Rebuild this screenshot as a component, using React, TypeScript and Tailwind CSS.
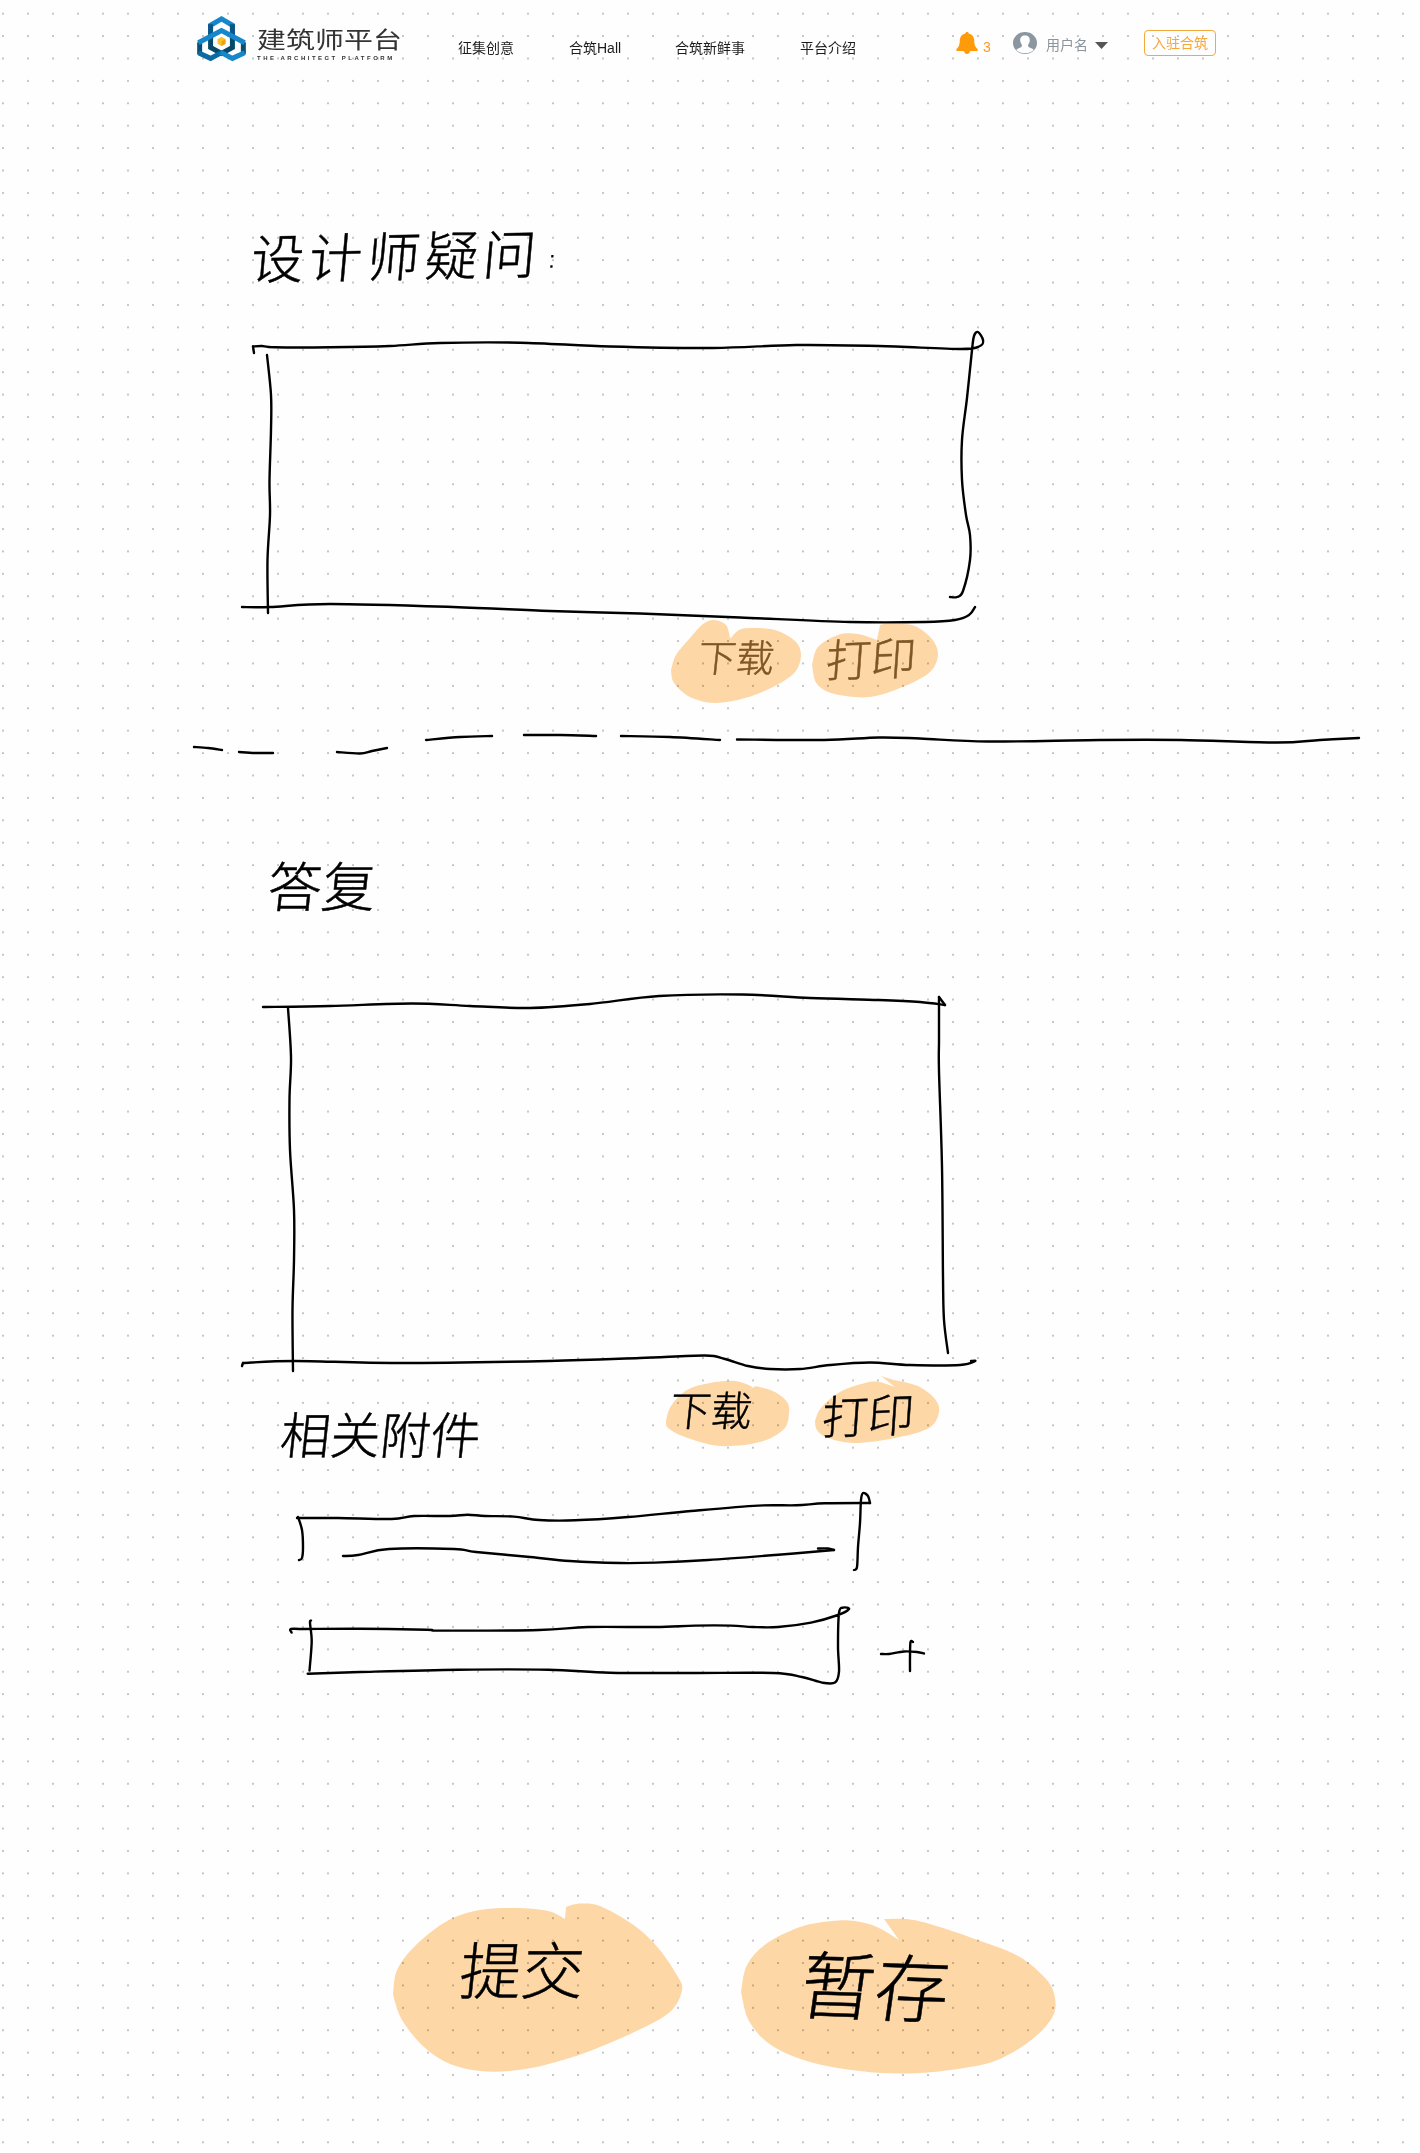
import type { ReactNode } from "react";

type Point = [number, number];

/** Turns a flat list of x,y numbers into a rounded pen line. */
function curve(source: string): string {
  const n = source.trim().split(/[\s,]+/).map(Number);
  const pts: Point[] = [];
  for (let i = 0; i < n.length; i += 2) pts.push([n[i], n[i + 1]]);
  const at = (i: number): Point => pts[Math.max(0, Math.min(pts.length - 1, i))];
  let d = `M${pts[0][0]} ${pts[0][1]}`;
  for (let i = 0; i < pts.length - 1; i++) {
    const [a, b, c, e] = [at(i - 1), at(i), at(i + 1), at(i + 2)];
    d += `C${b[0] + (c[0] - a[0]) / 6} ${b[1] + (c[1] - a[1]) / 6} ${c[0] - (e[0] - b[0]) / 6} ${c[1] - (e[1] - b[1]) / 6} ${c[0]} ${c[1]}`;
  }
  return d;
}

/** A marker blob: two rounded runs joined by the notch where the marker stroke closes. */
function blobPath(first: string, notch: string, second: string): string {
  return curve(first) + notch + curve(second).replace(/^[^C]*/, "") + "Z";
}

function Ink({ viewBox, lines, className }: { viewBox: string; lines: string[]; className: string }) {
  return (
    <svg viewBox={viewBox} className={className} fill="none" stroke="#000" strokeWidth="2.4" strokeLinecap="round" strokeLinejoin="round">
      {lines.map((line) => (
        <path key={line} d={curve(line)} />
      ))}
    </svg>
  );
}

function MarkerButton({
  viewBox,
  blob,
  size,
  text,
  children,
}: {
  viewBox: string;
  blob: string;
  size: string;
  text: string;
  children: ReactNode;
}) {
  return (
    <button className={`grid shrink-0 place-items-center ${size}`}>
      <svg viewBox={viewBox} className="size-full mix-blend-multiply [grid-area:1/1]">
        <path d={blob} fill="#ffd8a8" />
      </svg>
      <span className={`z-10 whitespace-nowrap font-light leading-none [-webkit-text-stroke:0.5px_currentColor] [grid-area:1/1] ${text}`}>{children}</span>
    </button>
  );
}

function Logo() {
  return (
    <svg viewBox="48 44 154 142" className="h-[47px] w-[51px] shrink-0" fill="none" strokeWidth="15">
      <path d="M92 112V75L125 56L158 75V112" stroke="#1687cb" />
      <path d="M92 72V118M158 72V118" stroke="#0b5688" />
      <path d="M92 104V142L125 160L158 142V104" stroke="#064a6b" />
      <path d="M59 126V162M191 126V162" stroke="#07506f" />
      <path d="M55 158L92 175L128 156" stroke="#0b6aa3" />
      <path d="M195 158L158 175L122 156" stroke="#1687cb" />
      <path d="M55 128L125 91L195 128" stroke="#1687cb" />
      <path d="M125 110L137 117V131L125 138L113 131V117Z" fill="#fbc02d" stroke="none" />
      <path d="M125 124L137 117V131L125 138Z" fill="#f0a010" stroke="none" />
    </svg>
  );
}

function Header() {
  return (
    <header className="flex h-[88px] items-start pl-[196px]">
      <a className="flex pt-[15px]">
        <Logo />
        <span className="ml-[10px] flex w-[147px] flex-col pt-[13px] text-[#333]">
          <span className="origin-left scale-x-[1.26] whitespace-nowrap text-[23px] leading-[24px]">建筑师平台</span>
          <span className="mt-[2px] whitespace-nowrap text-[6px] font-bold leading-[8px] tracking-[2.5px]">THE ARCHITECT PLATFORM</span>
        </span>
      </a>
      <nav className="ml-[54px] flex pt-[38px] text-[14px] leading-[20px] text-[#1c1c1c]">
        <a className="w-[111px]">征集创意</a>
        <a className="w-[106px]">合筑Hall</a>
        <a className="w-[125px]">合筑新鲜事</a>
        <a className="w-[156px]">平台介绍</a>
      </nav>
      <div className="flex pt-[32px]">
        <svg viewBox="0 0 22 22" className="h-[22px] w-[22px]" fill="#ff9a0a">
          <path d="M11 0c1 0 1.6.6 1.7 1.4C16.500 2.300 18 5 18.200 8.500c.2 4.500 1 6.500 3 8.200.9.800.7 2.300-.6 2.300H14c-.3 1.800-1.500 3-3 3s-2.700-1.200-3-3H1.400C.1 19-.1 17.500.8 16.700c2-1.700 2.800-3.700 3-8.200C4 5 5.500 2.300 9.300 1.400 9.400.6 10 0 11 0Z" />
        </svg>
        <span className="ml-[5px] w-[30px] pt-[6px] text-[14px] leading-[18px] text-[#ff9a1f]">3</span>
        <svg viewBox="0 0 24 22" className="h-[22px] w-[24px]" preserveAspectRatio="none">
          <ellipse cx="12" cy="11" rx="12" ry="11" fill="#8b96a0" />
          <path d="M12 3.500c3.300 0 5 2 4.800 5-.1 2-.9 3.300-1.700 4.300-.3 2 .7 2.700 3 3.400 1.400.4 2.200 1 2.500 1.900C18.500 20.200 15.500 21.300 12 21.300S5.500 20.200 3.400 18.100c.3-.9 1.100-1.500 2.500-1.900 2.300-.7 3.300-1.400 3-3.400-.8-1-1.600-2.300-1.700-4.300-.2-3 1.500-5 4.800-5Z" fill="#fff" />
        </svg>
        <span className="ml-[9px] w-[49px] pt-[3px] text-[14px] leading-[20px] text-[#8c949c]">用户名</span>
        <svg viewBox="0 0 13 7" className="mt-[10px] h-[7px] w-[13px]" fill="#555">
          <path d="M0 0H13L6.500 7Z" />
        </svg>
      </div>
      <button className="ml-[36px] mt-[30px] h-[26px] w-[72px] rounded-[4px] border border-[#f5a83c] text-[14px] leading-[24px] text-[#f8a638]">入驻合筑</button>
    </header>
  );
}

const downloadBlob = blobPath(
  "671 670 676 655 690 638 703 624 714 620 726 625 730 638",
  "L731 638",
  "731 638 739 630 752 628 775 630 795 641 801 655 795 672 775 686 745 698 715 703 690 697 674 683 671 670",
);

const printBlob = blobPath(
  "812 665 818 647 838 635 858 634 877 640",
  "L880 625Q884 623 898 624",
  "898 624 915 626 932 639 938 655 930 672 905 686 870 697 835 694 817 684 812 665",
);

const replyDownloadBlob = blobPath(
  "666 1421 671 1406 687 1390 710 1383 735 1381 753 1387",
  "L749 1390 756 1386",
  "756 1386 775 1392 787 1402 789 1413 784 1429 760 1442 720 1446 685 1437 668 1428 666 1421",
);

const replyPrintBlob = blobPath(
  "815 1421 821 1408 840 1392 865 1383 879 1382 895 1387",
  "L881 1376Q892 1380 904 1382",
  "904 1382 920 1387 935 1399 939 1412 929 1428 895 1438 855 1443 828 1438 817 1430 815 1421",
);

const submitBlob = blobPath(
  "393 1995 397 1970 415 1946 447 1921 480 1910 515 1908 548 1911 565 1919",
  "L566 1907Q572 1904 579 1903.500",
  "579 1903.500 600 1906 635 1926 659 1949 678 1977 682 1990 672 2010 645 2027 590 2051 545 2065 510 2071 480 2071 450 2064 424 2047 402 2020 393 1995",
);

const saveBlob = blobPath(
  "741 1992 747 1965 766 1944 800 1927 832 1921 855 1921 877 1927 899 1940",
  "L884 1919",
  "884 1919 906 1919 930 1924 975 1939 1018 1956 1046 1979 1055 1998 1052 2018 1030 2041 995 2061 950 2070 905 2073.500 860 2071 810 2062 771 2045 749 2021 741 1992",
);

export default function App() {
  return (
    <main className="h-[2153px] w-[1420px] overflow-hidden bg-[#fefefe] bg-[radial-gradient(circle_at_3px_13.7px,#b4b4b4_0.5px,transparent_1.300px)] bg-[length:25px_22.42px] font-['Liberation_Sans','Noto_Sans_CJK_SC',sans-serif] text-black">
      <Header />

      <section>
        <h1 className="ml-[251px] mt-[140px] h-[60px] w-[330px] -rotate-1 -skew-x-6 whitespace-nowrap text-[53px] font-light leading-[60px] tracking-[5px] [-webkit-text-stroke:0.5px_currentColor]">
          设计师疑问<span className="ml-[8px] align-[6px] text-[24px] [-webkit-text-stroke:0px]">:</span>
        </h1>
        <Ink
          viewBox="236 326 756 304"
          className="ml-[236px] mt-[38px] block h-[304px] w-[756px]"
          lines={[
            "254 353 253 346.500",
            "253 346.500 262 346 275 347.300 330 347.300 390 346 440 343 520 342.700 610 346.500 713 348 796 345 879 346 961 349 980 346 983 340 978 332 974 336 972 350 967 398 962 440 962 480 966 515 970 535 970 560 963 591 957 597 950 597",
            "267 355 271 395 271 430 269.500 481 270 515 267.500 560 268 613",
            "242 607 270 607 330 604 453 607 550 611 640 613.500 740 617.500 850 622 925 622 955 620 969 615 975 607",
          ]}
        />
        <div className="-mt-[18px] ml-[666px] flex">
          <MarkerButton viewBox="666 612 140 100" blob={downloadBlob} size="h-[100px] w-[140px]" text="-translate-y-[3px] -skew-x-6 text-[38px] text-[#7f5625]">下载</MarkerButton>
          <MarkerButton viewBox="806 612 140 100" blob={printBlob} size="h-[100px] w-[140px]" text="-translate-x-[5px] -translate-y-[2px] -rotate-2 -skew-x-6 text-[45px] text-[#7f5625]">打印</MarkerButton>
        </div>
      </section>

      <Ink
        viewBox="186 725 1180 40"
        className="ml-[186px] mt-[13px] block h-[40px] w-[1180px]"
        lines={[
          "194 747 208 748 222 750",
          "239 752 255 753 273 753",
          "337 752 360 753.500 372 751 387 748",
          "426 740 460 737 492 736",
          "524 735 560 735 596 736",
          "621 736 670 737 720 740",
          "737 739.500 824 740 879 737.500 920 738.500 988 741.500 1100 740 1181 740 1277 742.500 1320 740 1359 738",
        ]}
      />

      <section>
        <h2 className="ml-[268px] mt-[93px] h-[60px] w-[120px] -skew-x-6 text-[54px] font-light leading-[60px] [-webkit-text-stroke:0.5px_currentColor]">答复</h2>
        <Ink
          viewBox="236 986 756 394"
          className="ml-[236px] mt-[68px] block h-[394px] w-[756px]"
          lines={[
            "263 1007 330 1006 412 1003.500 470 1006 530 1008 590 1004 659 996 742 994.500 810 998 879 1000 920 1002 945 1005",
            "945 1005 939 997",
            "939 997 939 1040 939 1071 942 1167 943 1277 944 1320 948 1353",
            "288 1008 291 1057 289.500 1099 290 1150 294 1210 294 1260 292.500 1310 293 1371",
            "242 1366 243 1363",
            "243 1363 295 1361 398 1363 549 1361 640 1358 705 1355.500 725 1359 748 1366 770 1369 800 1369 830 1365 870 1362.500 910 1365 960 1365 975 1361 971 1361",
          ]}
        />
        <div className="-mt-[6px] ml-[282px] flex h-[100px]">
          <h3 className="w-[378px] -skew-x-6 pt-[33px] text-[50px] font-light leading-[60px] [-webkit-text-stroke:0.5px_currentColor]">相关附件</h3>
          <MarkerButton viewBox="660 1374 150 100" blob={replyDownloadBlob} size="h-[100px] w-[150px]" text="-translate-x-[24px] -translate-y-[12px] -skew-x-6 text-[41px]">下载</MarkerButton>
          <MarkerButton viewBox="810 1374 150 100" blob={replyPrintBlob} size="h-[100px] w-[150px]" text="-translate-x-[17px] -translate-y-[7px] -rotate-2 -skew-x-6 text-[46px]">打印</MarkerButton>
        </div>
        <Ink
          viewBox="286 1486 600 90"
          className="ml-[286px] mt-[12px] block h-[90px] w-[600px]"
          lines={[
            "297 1518 338 1518 391.600 1519 414 1516 449.600 1516 467.500 1514.700 485 1516 514 1516.600 539 1520 575 1520.300 628 1517 691 1511 758 1505.600 796 1505.300 825 1503.300 870 1503",
            "870 1503 868 1496 863 1493 861 1500 860 1523 858 1547 857 1567 854 1570",
            "298 1517 302 1530 303 1547 302 1558 299 1560",
            "343 1556 358 1555 389 1549 454 1549 476 1552 530 1557 570 1561 620 1563 655 1562.600 708 1560 775 1555 834 1550",
            "834 1550 828 1548.500 818 1548.500",
          ]}
        />
        <div className="ml-[286px] mt-[24px] flex">
          <Ink
            viewBox="286 1600 590 90"
            className="h-[90px] w-[590px]"
            lines={[
              "291.600 1632.600 291 1629 305 1629 360 1628.700 427 1629.700 441 1630.600 539 1630 588 1627 655 1627 695 1625.600 731 1625.600 753 1627 778 1627 811 1622.600 838 1615 849 1609 843 1607.600 839 1613 838 1646.600 839 1671.600 835 1682.600 822 1682.600 802 1677 773 1673 690 1673 610 1672.700 548 1669.700 458.500 1669.700 360 1672 307.700 1673.700",
              "311 1620.600 310 1623 311.700 1641.600 309.500 1670.600",
            ]}
          />
          <button aria-label="添加附件">
            <Ink viewBox="876 1600 60 90" className="h-[90px] w-[60px]" lines={["881 1654 889 1654 904 1651.500 917 1652 924 1653.500", "913 1642 910.500 1642 910 1657 910 1671"]} />
          </button>
        </div>
      </section>

      <footer className="ml-[386px] mt-[206px] flex">
        <MarkerButton viewBox="386 1896 334 184" blob={submitBlob} size="h-[184px] w-[334px]" text="-translate-x-[31px] -translate-y-[15px] -skew-x-6 text-[62px]">提交</MarkerButton>
        <MarkerButton viewBox="720 1896 350 184" blob={saveBlob} size="h-[184px] w-[350px]" text="-translate-x-[20px] translate-y-[2px] rotate-2 -skew-x-6 text-[74px]">暂存</MarkerButton>
      </footer>
    </main>
  );
}
